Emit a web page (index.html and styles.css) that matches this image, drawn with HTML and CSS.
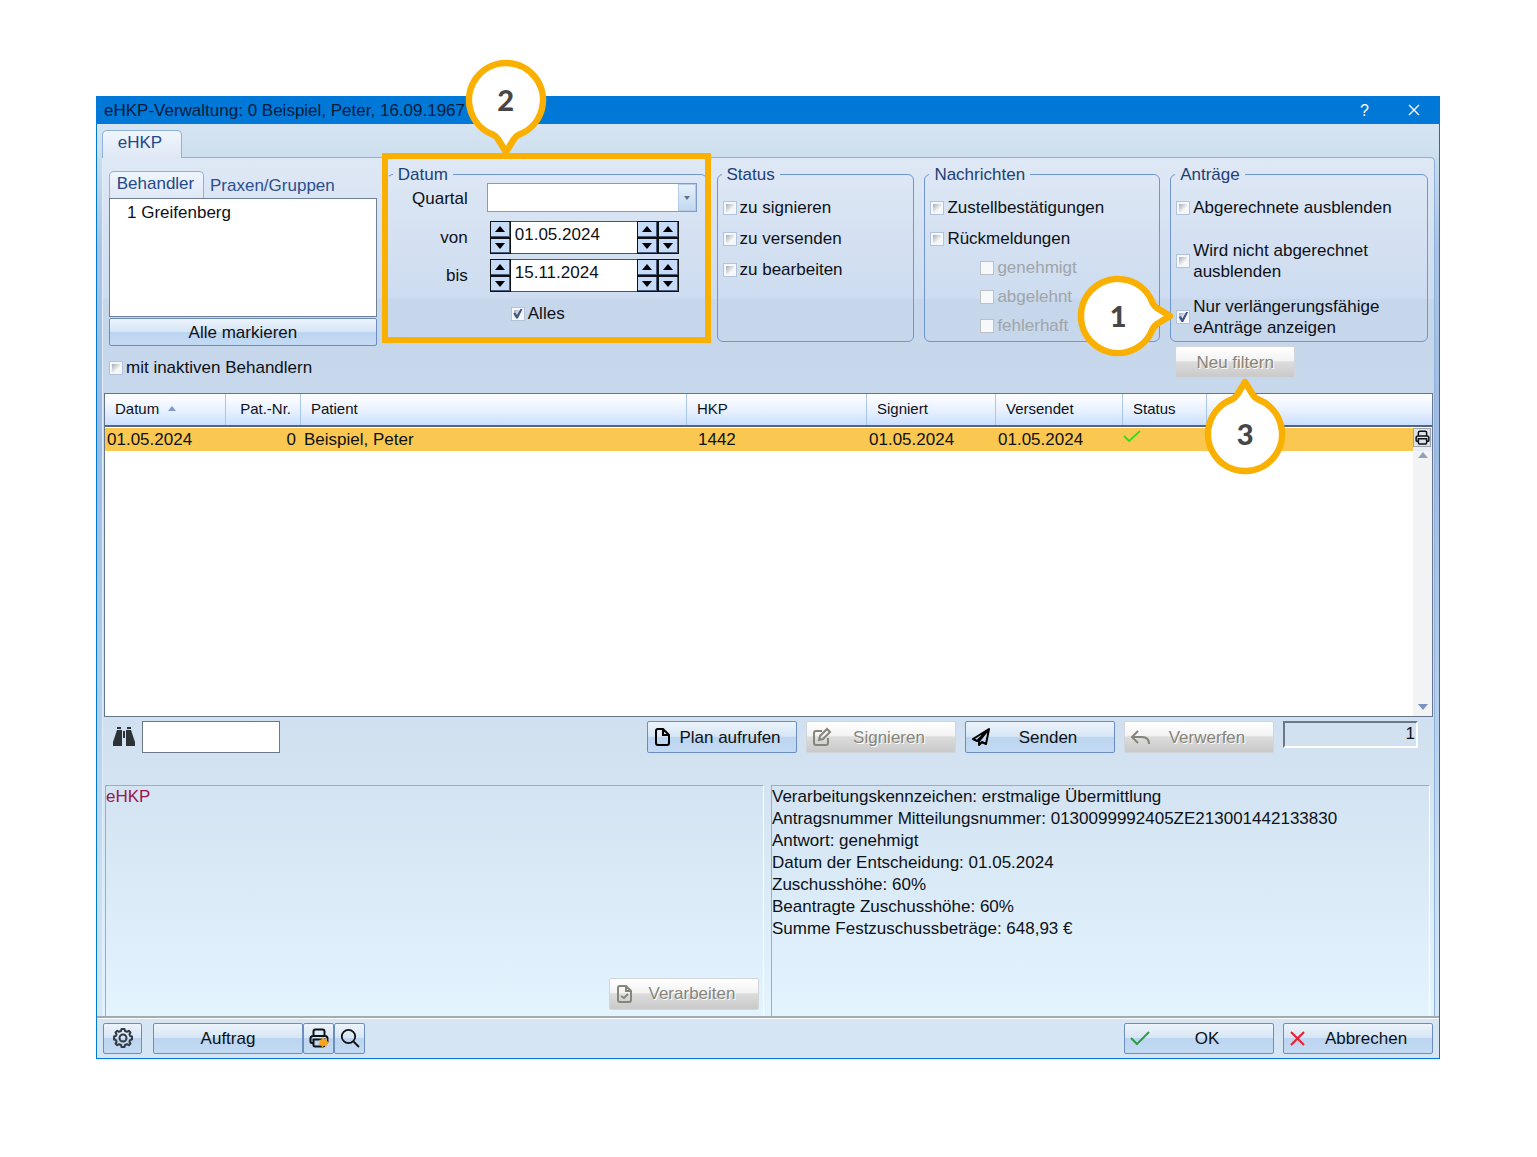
FILE: index.html
```html
<!DOCTYPE html>
<html lang="de">
<head>
<meta charset="utf-8">
<meta name="viewport" content="width=device-width, initial-scale=1">
<title>eHKP-Verwaltung</title>
<link rel="stylesheet" href="styles.css">
</head>
<body>
<svg class="sprite" aria-hidden="true">
  <symbol id="pin" viewBox="-60 -60 120 120">
    <path d="M-13 34.6A37 37 0 1 1 13 34.6Q10 36 8 39L0 52L-8 39Q-10 36 -13 34.6Z" fill="#fff" stroke="#f9b000" stroke-width="6.5" stroke-linejoin="round"/>
  </symbol>
  <symbol id="up" viewBox="0 0 12 8"><path d="M6 1L11 7H1Z"/></symbol>
  <symbol id="down" viewBox="0 0 12 8"><path d="M6 7L11 1H1Z"/></symbol>
  <symbol id="printer" viewBox="0 0 20 20">
    <path d="M4.500 8V3.500Q4.500 1.500 6.500 1.500H13.500Q15.500 1.500 15.500 3.500V8M4.500 15H3Q1.500 15 1.500 13.500V10.500Q1.500 8 4 8H16Q18.500 8 18.500 10.500V13.500Q18.500 15 17 15H15.500M4.500 11.500H15.500V17Q15.500 18.500 14 18.500H6Q4.500 18.500 4.500 17Z" fill="none" stroke="currentColor" stroke-width="2"/>
  </symbol>
</svg>
<main class="window">
  <header class="titlebar">
    <h1 class="title">eHKP-Verwaltung: 0 Beispiel, Peter, 16.09.1967</h1>
    <button class="title-button" type="button" aria-label="Hilfe">?</button>
    <button class="title-button" type="button" aria-label="Schließen"><svg width="12" height="12" viewBox="0 0 12 12"><path d="M1 1L11 11M11 1L1 11" stroke="#fff" stroke-width="1.400"/></svg></button>
  </header>

  <div class="frame">
    <nav class="tabs"><button class="tab tab-main" type="button">eHKP</button></nav>
    <div class="panel">
      <form class="filters">
        <section class="providers">
          <div class="subtabs">
            <button class="tab tab-sub" type="button">Behandler</button>
            <button class="tab-flat" type="button">Praxen/Gruppen</button>
          </div>
          <ul class="provider-list"><li>1 Greifenberg</li></ul>
          <button class="button mark-all" type="button">Alle markieren</button>
          <label class="check"><input type="checkbox">mit inaktiven Behandlern</label>
        </section>

        <div class="date-filter">
          <fieldset class="group dates">
            <legend>Datum</legend>
            <div class="date-row">
              <label class="date-label" for="quartal">Quartal</label>
              <span class="combo">
                <select id="quartal"><option></option></select>
                <span class="combo-arrow"><svg width="8" height="6" viewBox="0 0 8 6"><path d="M1 1H7L4 5Z" fill="#5f7291"/></svg></span>
              </span>
            </div>
            <div class="date-row from">
              <label class="date-label" for="von">von</label>
              <span class="stepper">
                <span class="spin"><button type="button" aria-label="Tag vor"><svg width="12" height="8"><use href="#up"/></svg></button><button type="button" aria-label="Tag zurück"><svg width="12" height="8"><use href="#down"/></svg></button></span>
                <input id="von" type="text" value="01.05.2024">
                <span class="spin"><button type="button" aria-label="Monat vor"><svg width="12" height="8"><use href="#up"/></svg></button><button type="button" aria-label="Monat zurück"><svg width="12" height="8"><use href="#down"/></svg></button></span>
                <span class="spin"><button type="button" aria-label="Jahr vor"><svg width="12" height="8"><use href="#up"/></svg></button><button type="button" aria-label="Jahr zurück"><svg width="12" height="8"><use href="#down"/></svg></button></span>
              </span>
            </div>
            <div class="date-row to">
              <label class="date-label" for="bis">bis</label>
              <span class="stepper">
                <span class="spin"><button type="button" aria-label="Tag vor"><svg width="12" height="8"><use href="#up"/></svg></button><button type="button" aria-label="Tag zurück"><svg width="12" height="8"><use href="#down"/></svg></button></span>
                <input id="bis" type="text" value="15.11.2024">
                <span class="spin"><button type="button" aria-label="Monat vor"><svg width="12" height="8"><use href="#up"/></svg></button><button type="button" aria-label="Monat zurück"><svg width="12" height="8"><use href="#down"/></svg></button></span>
                <span class="spin"><button type="button" aria-label="Jahr vor"><svg width="12" height="8"><use href="#up"/></svg></button><button type="button" aria-label="Jahr zurück"><svg width="12" height="8"><use href="#down"/></svg></button></span>
              </span>
            </div>
            <label class="check all-dates"><input type="checkbox" checked>Alles</label>
          </fieldset>
          <div class="highlight"></div>
          <div class="callout callout-two"><svg class="pin"><use href="#pin"/></svg><span>2</span></div>
        </div>

        <fieldset class="group">
          <legend>Status</legend>
          <div class="options">
            <label class="check"><input type="checkbox">zu signieren</label>
            <label class="check"><input type="checkbox">zu versenden</label>
            <label class="check"><input type="checkbox">zu bearbeiten</label>
          </div>
        </fieldset>

        <fieldset class="group">
          <legend>Nachrichten</legend>
          <div class="options">
            <label class="check"><input type="checkbox">Zustellbestätigungen</label>
            <label class="check"><input type="checkbox">Rückmeldungen</label>
            <div class="suboptions">
              <label class="check off"><input type="checkbox" disabled>genehmigt</label>
              <label class="check off"><input type="checkbox" disabled>abgelehnt</label>
              <label class="check off"><input type="checkbox" disabled>fehlerhaft</label>
            </div>
          </div>
        </fieldset>

        <div class="requests">
          <fieldset class="group">
            <legend>Anträge</legend>
            <div class="options spaced">
              <label class="check"><input type="checkbox">Abgerechnete ausblenden</label>
              <label class="check"><input type="checkbox"><span>Wird nicht abgerechnet<br>ausblenden</span></label>
              <label class="check"><input type="checkbox" checked><span>Nur verlängerungsfähige<br>eAnträge anzeigen</span></label>
            </div>
          </fieldset>
          <div class="callout callout-one"><svg class="pin"><use href="#pin"/></svg><span>1</span></div>
        </div>
        <div class="refilter">
          <button class="button refilter-button" type="button" disabled>Neu filtern</button>
          <div class="callout callout-three"><svg class="pin"><use href="#pin"/></svg><span>3</span></div>
        </div>
      </form>

      <div class="grid">
        <table>
          <colgroup><col class="c-date"><col class="c-no"><col><col class="c-hkp"><col class="c-signed"><col class="c-sent"><col class="c-status"><col class="c-rest"><col class="c-scroll"></colgroup>
          <thead>
            <tr><th>Datum <svg class="sort" width="8" height="5" viewBox="0 0 8 5"><path d="M0 5L4 0L8 5Z" fill="#7f9ac6"/></svg></th><th class="num">Pat.-Nr.</th><th>Patient</th><th>HKP</th><th>Signiert</th><th>Versendet</th><th>Status</th><th colspan="2"></th></tr>
          </thead>
          <tbody>
            <tr class="selected">
              <td>01.05.2024</td><td class="num">0</td><td>Beispiel, Peter</td><td class="hkp">1442</td><td>01.05.2024</td><td>01.05.2024</td>
              <td class="state"><svg width="18" height="14" viewBox="0 0 18 14"><path d="M1 7L6 12L17 2" fill="none" stroke="#2fe01c" stroke-width="1.800"/></svg></td><td></td>
              <td class="rail"><button class="print-list" type="button" aria-label="Liste drucken"><svg width="15" height="15"><use href="#printer"/></svg></button></td>
            </tr>
            <tr class="rest">
              <td colspan="8"></td>
              <td class="rail"><div class="track"><svg width="10" height="6" viewBox="0 0 10 6"><path d="M0 6L5 0L10 6Z" fill="#94a1b8"/></svg><svg width="10" height="6" viewBox="0 0 10 6"><path d="M0 0L5 6L10 0Z" fill="#7b93bd"/></svg></div></td>
            </tr>
          </tbody>
        </table>
      </div>

      <div class="toolbar">
        <label class="search">
          <svg width="22" height="20" viewBox="0 0 22 20"><path d="M4 0H8V2H4ZM14 0H18V2H14ZM4 3H9V19H0V15L3 6ZM13 3H18L19 6L22 15V19H13ZM10 4H12V11H10Z" fill="#2d3236"/></svg>
          <input type="text" aria-label="Suchen">
        </label>
        <button class="button action" type="button"><svg width="20" height="20" viewBox="0 0 20 20"><path d="M4 2H10L16 8V16Q16 18 14 18H5Q3 18 3 16V4Q3 2 5 2M10 2V8H16" fill="none" stroke="#000" stroke-width="2"/></svg><span>Plan aufrufen</span></button>
        <button class="button action" type="button" disabled><svg width="20" height="20" viewBox="0 0 20 20"><path d="M10 4H4Q2 4 2 6V16Q2 18 4 18H14Q16 18 16 16V11M7 13L8 9L15 2L18 5L11 12Z" fill="none" stroke="currentColor" stroke-width="2"/></svg><span>Signieren</span></button>
        <button class="button action" type="button"><svg width="20" height="20" viewBox="0 0 20 20"><path d="M18 2L2 12L6 14L17 3L8 14V18L11 15L15 17Z" fill="none" stroke="#000" stroke-width="2" stroke-linejoin="round"/></svg><span>Senden</span></button>
        <button class="button action" type="button" disabled><svg width="20" height="20" viewBox="0 0 20 20"><path d="M8 4L2 10L8 16M2 10H12Q19 10 19 17" fill="none" stroke="currentColor" stroke-width="2"/></svg><span>Verwerfen</span></button>
        <output class="count">1</output>
      </div>

      <div class="details">
        <section class="detail">
          <p class="kind">eHKP</p>
          <button class="button action process" type="button" disabled><svg width="20" height="20" viewBox="0 0 20 20"><path d="M4 2H11L16 7V16Q16 18 14 18H5Q3 18 3 16V4Q3 2 5 2M11 2V7H16M6 12L9 14L13 10" fill="none" stroke="currentColor" stroke-width="2"/></svg><span>Verarbeiten</span></button>
        </section>
        <section class="detail">
          <p>Verarbeitungskennzeichen: erstmalige Übermittlung</p>
          <p>Antragsnummer Mitteilungsnummer: 0130099992405ZE213001442133830</p>
          <p>Antwort: genehmigt</p>
          <p>Datum der Entscheidung: 01.05.2024</p>
          <p>Zuschusshöhe: 60%</p>
          <p>Beantragte Zuschusshöhe: 60%</p>
          <p>Summe Festzuschussbeträge: 648,93 €</p>
        </section>
      </div>
    </div>
  </div>

  <footer class="footer">
    <button class="button settings" type="button" aria-label="Einstellungen"><svg width="20" height="20" viewBox="0 0 20 20"><path d="M8 3L8.500 1H11.500L12 3L14 3.800L15.800 2.800L17.500 4.500L16.400 6.300L17.200 8L19 8.500V11.500L17.200 12L16.400 13.700L17.500 15.500L15.800 17.200L14 16.200L12 17L11.500 19H8.500L8 17L6 16.200L4.200 17.200L2.500 15.500L3.600 13.700L2.800 12L1 11.500V8.500L2.800 8L3.600 6.300L2.500 4.500L4.200 2.800L6 3.800Z" fill="none" stroke="#333a42" stroke-width="2" stroke-linejoin="round"/><circle cx="10" cy="10" r="3.500" fill="none" stroke="#333a42" stroke-width="2"/></svg></button>
    <button class="button order" type="button">Auftrag</button>
    <button class="button square" type="button" aria-label="Drucken"><svg width="20" height="20" viewBox="0 0 20 20"><use href="#printer"/><path d="M14 9L15.500 11.200L18 10.500L18 13L20 14.500L18 16L17.500 18.500L15 17.800L13 19.500L12 17L9.500 16.500L10.800 14.200L9.800 12L12.500 11.600Z" fill="#f2a51d"/></svg></button>
    <button class="button square" type="button" aria-label="Vorschau"><svg width="20" height="20" viewBox="0 0 20 20"><circle cx="8.500" cy="8.500" r="6.700" fill="none" stroke="#111" stroke-width="1.800"/><path d="M13.500 13.500L19 19" stroke="#111" stroke-width="1.800"/></svg></button>
    <span class="grow"></span>
    <button class="button action" type="button"><svg width="20" height="20" viewBox="0 0 20 20"><path d="M1 10L7 16L19 4" fill="none" stroke="#2e9e46" stroke-width="2"/></svg><span>OK</span></button>
    <button class="button action" type="button"><svg width="20" height="20" viewBox="0 0 20 20"><path d="M2 4L15 17M15 4L2 17" fill="none" stroke="#ec1c2c" stroke-width="2"/></svg><span>Abbrechen</span></button>
  </footer>
</main>
</body>
</html>
```
FILE: styles.css
```css
* { box-sizing: border-box; }

body {
  margin: 0;
  padding: 96px 97px 96px 96px;
  background: #fff;
  color: #0d1117;
  font: 17px/21px "Liberation Sans", Arial, sans-serif;
}

button, input, select { font: inherit; color: inherit; margin: 0; }
button { padding: 0; }
svg { flex: none; }
p, ul { margin: 0; padding: 0; list-style: none; }
.sprite { position: absolute; width: 0; height: 0; }

.window {
  border: 1px solid #0078d7;
  border-top: 0;
  background: #d5e5f4;
}

/* Title bar */
.titlebar { display: flex; align-items: center; height: 28px; background: #0078d7; }
.title { flex: 1; margin: 0; padding-left: 7px; font-size: 17px; font-weight: 400; color: #071b3a; }
.title-button {
  display: flex; align-items: center; justify-content: center;
  width: 49px; height: 28px; border: 0; background: none; color: #fff; font-size: 16px;
}
.title-button:last-child { margin-right: 1px; }

/* Tabs and panel */
.frame {
  padding: 6px 4px 0 5px;
  background: linear-gradient(#d9e6f4, #cadded 32px, #a9c4e5 120px, #9dbce4 330px, #b9d3ee 620px, #d5e8f8);
}
.tabs {
  display: flex;
  margin: -6px -4px 0 -5px;
  padding: 6px 5px 0;
  background: linear-gradient(#d6e4f2, #cddfee);
}
.tab {
  border: 1px solid #8fb0d8;
  border-bottom: 0;
  border-radius: 5px 5px 0 0;
  background: linear-gradient(#f0f6fd, #dfe8f5);
  color: #23478b;
}
.tab-main { width: 80px; height: 28px; margin-bottom: -1px; padding: 0 4px 4px 0; position: relative; }
.panel {
  border: 1px solid #8fb0d8;
  border-bottom: 0;
  border-left-color: #e0eefa;
  border-radius: 0 5px 0 0;
  background: linear-gradient(#dfe8f5, #cddcf0 140px, #c6d6eb 142px, #c8d8ec 236px, #d1e0f0 560px, #d4e4f2 640px, #e3f4ff);
}

/* Filters */
.filters {
  display: grid;
  grid-template-columns: 268fr 320fr 198fr 236fr 258fr;
  grid-template-rows: auto auto;
  column-gap: 10px;
  padding: 6px 6px 15px 6px;
}
.providers { grid-row: span 2; display: flex; flex-direction: column; padding-top: 7px; }
.subtabs { display: flex; gap: 6px; }
.tab-sub { width: 95px; height: 27px; padding: 0 2px 3px 0; }
.tab-flat { border: 0; padding-top: 2px; background: none; color: #2c4f8f; }
.provider-list {
  height: 119px;
  padding: 3px 17px;
  border: 1px solid #6f7f96;
  background: #fff;
}
.button {
  display: flex; align-items: center; justify-content: center;
  height: 32px;
  border: 1px solid #6c8ebf;
  border-radius: 2px;
  background: linear-gradient(#edf4fc, #d6e5f5 48%, #bcd5f0 50%, #c3daf3);
}
.button:disabled {
  border-color: #d2d6da;
  background: linear-gradient(#fff, #f3f3f3 45%, #dcdcdc 50%, #c9c9c9);
  color: #86857a;
  text-shadow: 1px 1px #fff;
}
.mark-all { height: 28px; margin: 1px 0 11px; }

.check { display: flex; align-items: center; gap: 3px; }
.check input {
  appearance: none;
  flex: none;
  width: 14px; height: 14px;
  border: 1px solid #b3c4da;
  background: linear-gradient(135deg, #a5adb8, #f8f8f8 70%) content-box, #f4f7fb;
  padding: 2px;
  position: relative;
}
.check input:checked::after {
  content: "";
  position: absolute;
  inset: 1px;
  background: #3d5586;
  clip-path: polygon(5% 50%, 25% 40%, 42% 65%, 80% 0, 100% 0, 50% 100%, 35% 100%);
}
.off { color: #9fa5a8; }
.check input:disabled { background: #f6f8fa; border-color: #bcc1c6; }

.group {
  min-width: 0;
  height: 178px;
  margin: 0;
  padding: 12px 5px 0;
  border: 1px solid #6e96cf;
  border-radius: 6px;
}
.group legend { margin-left: -1px; padding: 0 5px; color: #1d3f78; }
.options { display: flex; flex-direction: column; gap: 10px; }
.suboptions { display: flex; flex-direction: column; gap: 8px; margin: -2px 0 0 50px; }
.spaced { gap: 14px; }
.spaced > :first-child { margin-bottom: 8px; }

.date-filter, .requests, .refilter { position: relative; }
.dates { padding: 0; border-color: #6e96cf transparent transparent; }
.dates legend { margin-left: 5px; }
.date-row { display: flex; align-items: center; gap: 19px; }
.date-label { width: 80px; text-align: right; }
.combo { position: relative; width: 210px; height: 29px; margin-top: -2px; }
.combo select { appearance: none; width: 100%; height: 100%; border: 1px solid #7d9dcb; border-radius: 0; background: #fff; }
.combo-arrow {
  position: absolute; inset: 1px 1px 1px auto;
  display: flex; align-items: center; justify-content: center;
  width: 18px;
  border: 1px solid #b5cbe6;
  background: linear-gradient(#e5effa, #c3d8ef);
  pointer-events: none;
}
.from { margin-top: 9px; }
.to { margin-top: 5px; }
.stepper { display: flex; height: 33px; margin-left: 3px; }
.stepper input {
  width: 126px; height: 33px;
  padding: 0 4px 5px;
  border: solid #555; border-width: 1px 0;
  background: #fff;
}
.spin { display: flex; flex-direction: column; width: 21px; }
.spin button {
  display: flex; flex: 1; align-items: center; justify-content: center;
  border: 1px solid #111;
  box-shadow: inset -1px -1px #4a5a78;
  background: #c6dbf8;
}
.all-dates { margin: 11px 0 0 123px; }

.highlight {
  position: absolute; inset: -11px -4px -1px -5px;
  border: 6px solid #f9b000;
  pointer-events: none;
}

/* Numbered callouts lie over the window */
.callout {
  position: absolute; z-index: 2;
  display: grid; place-items: center;
  width: 120px; height: 120px;
  margin: -60px 0 0 -60px;
  color: #474747;
  font: 900 29px/36px Lato, sans-serif;
  pointer-events: none;
}
.callout > * { grid-area: 1 / 1; }
.callout > span { z-index: 1; }
.pin { width: 120px; height: 120px; }
.callout-one { left: -52px; top: 152px; }
.callout-one .pin { transform: rotate(-90deg); }
.callout-two { left: 119px; top: -64px; }
.callout-three { left: 75px; top: 92px; }
.callout-three .pin { transform: rotate(180deg); }

.refilter { grid-column: 5; padding: 4px 0 0 5px; }
.refilter-button { width: 120px; }

/* List of plans */
.grid { margin: 0 1px; border: 1px solid #65758e; background: #fff; }
table { width: 100%; border-collapse: separate; border-spacing: 0; table-layout: fixed; }
.c-date { width: 121px; }
.c-no { width: 75px; }
.c-hkp { width: 180px; }
.c-signed { width: 129px; }
.c-sent { width: 127px; }
.c-status { width: 84px; }
.c-rest { width: 206px; }
.c-scroll { width: 19px; }
th {
  height: 33px;
  padding: 0 10px 2px;
  border-bottom: 2px solid #56657f;
  background: linear-gradient(#fff, #eaf2ff 50%, #cbe0ff);
  font-size: 15px; font-weight: 400; text-align: left;
}
th:not(:last-child) { box-shadow: inset -1px 0 #a9c6ec; }
.sort { margin: 0 0 3px 5px; }
td { height: 24px; padding: 0 2px; }
.selected td { background: #fac850; border-top: 1px solid #fff; }
th.num, td.num { text-align: right; }
td.num { padding-right: 5px; }
.selected .num + td { padding-left: 3px; }
.selected .hkp { padding-left: 11px; }
.selected .state { padding: 1px 0 0; vertical-align: top; }
.state svg { display: block; }
.selected .rail { background: #e9eef5; vertical-align: top; }
.print-list { display: flex; align-items: center; justify-content: center; width: 18px; height: 19px; border: 1px solid #9aa3ae; background: #dfe3e8; }
.rest td { height: 265px; }
td.rail { padding: 0; }
.rest .rail { background: #f2f3f5; }
.track { display: flex; flex-direction: column; align-items: center; justify-content: space-between; height: 265px; padding: 1px 0 6px; }

/* Actions */
.toolbar { display: flex; align-items: flex-start; gap: 9px; padding: 4px 16px 32px 10px; }
.search { display: flex; align-items: center; gap: 7px; margin-right: auto; }
.search input { width: 138px; height: 32px; border: 1px solid #6d7886; background: #fff; }
.action { width: 150px; padding: 0 9px 0 5px; }
.action span { flex: 1; text-align: center; }
.count {
  width: 135px; height: 27px;
  padding: 0 1px;
  border: 2px solid; border-color: #6d7886 #fff #fff #6d7886;
  text-align: right;
}

.details { display: flex; gap: 7px; padding: 0 4px 0 2px; }
.detail {
  display: flex; flex: 1; flex-direction: column;
  min-width: 0; min-height: 231px;
  border: solid; border-width: 1px 1px 0 1px; border-color: #a3acb5 #fff #fff #a3acb5;
  line-height: 22px;
}
.kind { color: #9b1450; }
.process { margin: auto 4px 6px auto; }

/* Footer */
.footer { display: flex; align-items: center; height: 42px; padding: 0 6px 0 6px; border-top: 2px solid #a2aab2; box-shadow: inset 0 1px #fff; }
.footer .button { height: 31px; }
.footer .action + .action { margin-left: 9px; }
.settings { width: 39px; margin-right: 11px; }
.order { width: 150px; }
.square { width: 31px; }
.grow { flex: 1; }
```
